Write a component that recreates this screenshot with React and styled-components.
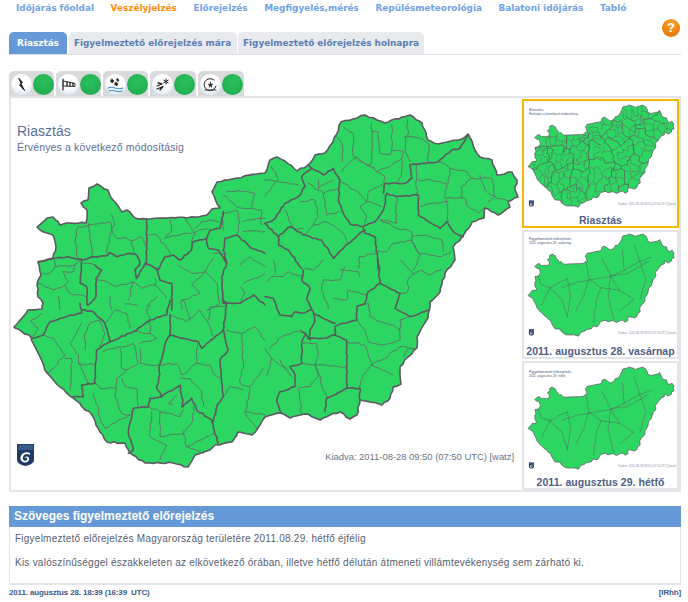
import React from "react";
import styled, { createGlobalStyle } from "styled-components";

const Global = createGlobalStyle`
  html, body { margin: 0; padding: 0; background: #fff; }
  body { width: 688px; height: 602px; overflow: hidden; font-family: "Liberation Sans", Arial, sans-serif; }
`;

const roughen = (d, step, amp) => {
  const closed = /Z\s*$/.test(d);
  const n = d.replace(/[MZ]/g, " ").trim().split(/\s+/).map(Number);
  const pts = [];
  for (let i = 0; i < n.length; i += 2) pts.push([n[i], n[i + 1]]);
  if (closed) pts.push(pts[0]);
  let out = `M${pts[0][0]} ${pts[0][1]}`;
  let seed = pts[0][0] * 13.7 + pts[0][1] * 7.3;
  for (let i = 1; i < pts.length; i++) {
    const [ax, ay] = pts[i - 1];
    const [bx, by] = pts[i];
    const len = Math.hypot(bx - ax, by - ay);
    const count = Math.max(1, Math.round(len / step));
    for (let k = 1; k <= count; k++) {
      const t = k / count;
      seed += 1;
      const r = Math.sin(seed * 12.9898) * 43758.5453;
      const j = k === count ? 0 : ((r - Math.floor(r)) - 0.5) * 2 * amp;
      const x = ax + (bx - ax) * t + (-(by - ay) / (len || 1)) * j;
      const y = ay + (by - ay) * t + ((bx - ax) / (len || 1)) * j;
      out += ` ${x.toFixed(1)} ${y.toFixed(1)}`;
    }
  }
  return out + (closed ? "Z" : "");
};

const OUTLINE = roughen("M14 327 23 317 28 310 42 309 43 303 38 297 37 285 41 275 38 262 53 258 56 247 53 235 40 230 37 227 47 218 53 217 60 225 70 223 86 223 87 210 81 203 88 200 89 188 97 184 108 190 113 200 122 212 127 210 135 218 147 219 167 218 187 218 207 215 212 209 220 208 212 192 217 182 237 178 265 173 270 160 277 157 285 161 297 171 308 165 315 155 325 153 333 142 341 122 365 115 385 123 402 117 410 115 422 123 428 140 438 144 462 139 468 134 475 150 480 157 492 160 497 175 512 172 517 180 515 190 518 197 508 202 510 207 498 215 485 208 484 218 472 222 462 237 453 247 455 260 445 273 440 292 430 302 428 318 417 337 417 348 408 357 400 367 401 384 393 387 390 398 382 405 360 400 357 415 350 419 340 412 330 415 320 420 308 414 290 418 280 413 265 417 258 428 252 435 238 432 232 442 215 445 210 450 195 455 188 467 173 463 145 463 130 453 125 443 107 442 100 432 92 415 73 398 60 387 47 373 33 343 31 337 15 328Z", 4, 0.8);

const QUADS = [
  {
    at: [10, 150],
    thick: [
      "M85 335 130 325 175 320 220 330 250 320 290 318 300 308 320 320 355 310 380 315 390 340 375 360 380 385 405 340 420 345 445 360 465 320 490 315 510 330 545 300 550 275 590 265 595 295 625 300 650 340 640 300 645 265 680 255 725 295 765 310",
      "M590 265 600 240 630 235 640 185",
      "M410 208 410 345",
      "M215 330 210 400 230 410 232 465",
      "M255 345 275 360 258 385 258 440 235 465",
      "M440 355 450 390 485 400 485 480",
      "M650 340 635 380 640 460 690 460 730 435 765 465",
    ],
    thin: [
      "M235 220 245 290 245 325",
      "M195 270 205 230 300 215 305 240 290 310",
      "M195 270 205 325",
      "M305 195 315 225 305 240 320 265 345 262 365 272 395 260 410 290",
      "M365 272 370 305 385 320",
      "M480 210 485 245 465 265 510 255 535 250",
      "M410 255 440 255 470 295 480 310",
      "M525 205 545 235 555 250 545 280",
      "M555 235 575 215 600 210 640 215",
      "M540 250 595 235",
      "M130 325 135 350 195 345 215 330",
      "M100 370 120 370 135 350",
      "M160 365 190 365 195 345",
      "M160 365 175 395 165 405 180 430 230 440",
      "M85 400 130 420 165 405",
      "M255 345 220 340",
      "M258 385 290 395 320 410 370 395 395 415 435 405",
      "M370 395 355 450",
      "M435 385 435 405 470 445",
      "M505 345 545 370 585 365 595 345 610 325",
      "M585 365 620 400",
      "M585 365 545 405 570 430 515 450 515 480",
      "M610 310 650 310",
      "M640 240 640 190 680 180 690 215 680 255",
      "M690 345 720 320 765 350",
      "M700 400 765 370",
      "M690 410 705 430 690 460",
      "M620 400 630 460 590 480",
      "M650 125 700 125 735 130 725 170",
      "M640 135 680 170 755 180 755 225",
      "M700 215 765 205",
      "M700 245 765 245",
      "M145 440 150 480",
      "M300 440 305 480",
      "M345 462 380 465",
      "M410 470 440 440",
    ],
  },
  {
    at: [265, 100],
    thick: [
      "M0 370 25 360 60 310 100 290 120 260 110 230 140 205 175 225 205 205 225 240 220 300 235 340 255 372 295 380 330 365 355 330 365 280 395 290 460 285 460 345 525 385 545 365 570 400 595 410",
      "M360 250 420 250 440 235 435 195 520 185 560 150 585 145 610 103",
      "M130 195 140 205",
      "M295 385 300 400 330 410 340 510",
      "M300 390 250 430 205 475 170 420 115 405 75 380 40 410 40 435 70 450 110 505",
      "M0 370 40 410",
      "M360 250 355 280",
    ],
    thin: [
      "M235 80 265 100 265 170 285 185 330 205",
      "M215 110 230 130 232 185",
      "M320 70 320 190 310 195 335 215",
      "M320 95 340 95 345 160 375 165 380 150 415 155 410 215 400 245",
      "M380 75 380 150",
      "M425 55 430 105 420 110 420 155 435 185",
      "M420 110 470 115 490 130 490 185",
      "M230 215 270 170 310 195",
      "M335 215 360 230 355 250 310 275 305 305 350 320",
      "M225 245 270 270 305 305 285 320 305 350 295 380",
      "M335 215 375 200 410 175",
      "M130 250 160 270 175 280 185 345 220 335",
      "M160 240 160 265 205 240",
      "M105 305 150 300 160 350 145 375 115 405",
      "M60 330 85 385 115 385",
      "M175 280 220 265",
      "M145 375 185 365 235 400 250 430",
      "M0 240 40 245 100 255",
      "M20 200 40 240 0 290",
      "M520 185 550 200 555 205 605 215",
      "M460 240 500 240 545 250 540 295 600 295 605 315 640 340 660 320",
      "M455 195 455 285",
      "M555 205 550 250",
      "M605 215 620 235 590 260 590 295",
      "M620 235 680 235 690 290 670 305",
      "M645 225 660 270 695 295 735 305",
      "M545 300 550 365",
      "M465 320 500 310 550 305",
      "M395 290 395 370 345 360 385 380 440 395 440 420",
      "M440 410 480 405 530 420 535 455",
      "M330 455 365 455 385 430 440 420 460 460 530 470 560 455",
      "M440 420 465 465 445 510",
      "M285 470 335 460",
      "M285 470 280 505",
    ],
  },
  {
    at: [10, 300],
    thick: [
      "M65 115 100 105 120 65 180 45 215 40 210 10",
      "M215 30 250 35 285 70 300 125 370 95 420 60 470 45 480 0",
      "M300 125 260 150 255 250 215 255 220 290 190 290",
      "M480 45 480 105 520 115 565 125 575 145 640 90 655 150 630 180 640 290 620 320 610 365 560 330 545 295 515 320",
      "M470 120 450 190 445 250 440 265 455 290 420 295 415 320 370 325 355 400 370 450 355 460",
      "M480 105 470 120",
      "M455 290 510 255 520 320",
      "M640 90 650 10 640 0",
      "M605 365 625 430",
    ],
    thin: [
      "M65 110 85 85 60 65 95 40",
      "M100 105 130 115 165 165 115 220",
      "M165 175 185 175 180 270",
      "M215 70 180 130 205 165 205 190 255 195",
      "M225 150 225 100 240 70 270 60 285 100 270 140",
      "M205 190 235 250",
      "M280 155 325 140 345 140 370 130 385 190 350 210",
      "M330 145 335 205 350 210",
      "M390 145 390 190 445 195",
      "M420 60 420 100 440 115 390 130",
      "M370 95 420 100",
      "M285 70 315 30 350 40 360 85",
      "M420 60 410 30 420 15",
      "M480 45 530 65 570 30 590 60",
      "M520 0 540 60",
      "M590 60 610 110",
      "M595 60 600 20 650 15",
      "M565 125 560 190 600 195 610 220 635 235",
      "M445 195 500 190 515 225 560 190",
      "M510 235 540 235 575 275 580 320",
      "M350 210 320 235 315 290 335 340 360 345",
      "M255 250 270 265 315 265",
      "M250 280 265 320 265 345 285 385 360 345",
      "M335 235 345 260 380 265 385 320",
      "M425 335 420 410 470 435 450 480",
      "M450 335 450 410 525 400",
      "M415 320 450 335 510 350 520 330",
      "M555 310 545 370 520 395 530 440 580 460",
      "M530 440 610 400",
      "M490 315 475 310 500 285",
      "M650 90 695 100 700 190 690 250 720 260 760 205",
      "M640 290 660 260 700 270",
      "M720 260 705 340 740 385",
      "M705 335 765 345",
      "M695 100 735 80 765 120",
    ],
  },
  {
    at: [265, 260],
    thick: [
      "M340 0 345 70 310 95 300 130 275 140 275 180 235 190 210 200 210 225 245 240 245 385 285 385 285 420",
      "M115 30 110 60 135 85 125 120 145 155 150 180 135 210 135 240 120 220 110 215",
      "M345 70 405 100 390 145 435 170 490 150",
      "M0 110 25 115 45 165 80 170 90 155 110 160 140 150",
      "M135 235 175 235 210 225",
      "M145 160 210 190",
      "M120 225 110 250 110 310 75 320 90 345 90 380 45 395 35 425 50 460",
      "M185 415 180 455",
      "M245 385 185 415",
    ],
    thin: [
      "M405 0 445 40 430 55 428 95 405 100",
      "M445 45 470 30 495 45 530 30",
      "M275 140 310 130 315 170 345 185 385 195 405 210",
      "M275 180 300 210 310 245 350 255 405 240",
      "M405 240 405 180 435 170",
      "M405 260 350 300 320 315 300 255 245 245",
      "M405 260 455 265",
      "M320 315 385 345",
      "M320 315 295 345 280 385",
      "M150 315 245 320",
      "M115 250 155 250 160 275 150 315 185 410",
      "M110 310 150 315 160 350 135 380 100 385 110 460",
      "M0 265 20 295 70 330",
      "M20 295 5 345",
      "M45 300 80 350",
      "M15 265 50 230 110 210",
      "M175 60 225 60 240 20",
      "M175 60 170 90 190 145",
      "M205 115 245 120 250 90 305 105",
      "M5 65 20 50 55 50 70 35 115 50",
      "M25 0 30 40",
      "M175 0 145 30 120 25",
      "M225 30 280 35 285 50",
      "M415 290 430 265",
    ],
  },
].map(q => ({
  at: q.at,
  thick: q.thick.map(d => roughen(d, 10, 2)),
  thin: q.thin.map(d => roughen(d, 12, 3)),
}));

const SECONDARY = [
  "M48 260 60 290 90 300 125 280 150 270",
  "M130 300 190 280 250 270 300 260 360 250 430 210",
  "M215 215 225 270 205 330 180 380",
  "M300 260 330 310 380 340 330 380",
  "M150 270 160 330 150 400",
  "M90 300 130 340 150 400",
  "M225 270 265 300 250 340 240 420",
  "M265 300 330 310",
  "M340 170 345 240 300 260",
  "M345 240 400 210 440 195",
  "M400 210 420 270 400 340",
  "M300 260 290 330 310 410",
  "M90 300 60 360",
  "M380 150 400 210",
  "M270 200 300 260",
].map(d => roughen(d, 5, 1.6));

const MapSvg = styled.svg`
  display: block;
  width: ${p => p.$w}px;
  height: ${p => p.$h}px;
  flex: none;
`;

const Land = styled.path`
  fill: #2dd662;
  stroke: #5c5a60;
  stroke-width: ${p => p.$s}px;
  stroke-linejoin: round;
  vector-effect: non-scaling-stroke;
`;

const Border = styled.path`
  fill: none;
  stroke: ${p => (p.$major ? "#5a5a60" : "#5f7068")};
  stroke-width: ${p => p.$s}px;
  stroke-linejoin: round;
  stroke-linecap: round;
  vector-effect: non-scaling-stroke;
`;

const MapShapes = ({ major, minor, simple }) => (
  <>
    <Land d={OUTLINE} $s={major} />
    {simple
      ? SECONDARY.map((d, i) => <Border key={i} d={d} $major $s={minor} />)
      : QUADS.map(q => (
          <g key={q.at[0] + "-" + q.at[1]} transform={`translate(${q.at[0]} ${q.at[1]}) scale(0.3333)`}>
            {q.thin.map((d, i) => <Border key={i} d={d} $s={minor} />)}
            {q.thick.map((d, i) => <Border key={"t" + i} d={d} $major $s={major} />)}
          </g>
        ))}
  </>
);

const Shield = () => (
  <g>
    <path d="M0 0H17V16Q17 20 8.500 22 0 20 0 16Z" fill="#1e3a66" />
    <rect x="1" y="1" width="15" height="5" fill="#3c5a88" />
    <path d="M13 9C8 7 3 10 3.500 15 4 19 10 20 12 16 13 13 9 11 7.500 14 9 13 11 14 10 16 8 18 5 16 6 13 7 10 10 9 13 11Z" fill="#fff" />
  </g>
);

const Page = styled.div`
  position: relative;
  width: 688px;
  height: 602px;
`;

const Nav = styled.nav`
  display: flex;
  gap: 16.6px;
  height: 32px;
  padding: 1.5px 0 0 16px;
  box-sizing: border-box;
`;

const NavLink = styled.span`
  font: bold 8.9px/13px "DejaVu Sans", Verdana, sans-serif;
  color: ${p => (p.$active ? "#ff8c0a" : "#6ea3e6")};
  white-space: nowrap;
`;

const Help = styled.div`
  position: absolute;
  left: 662px;
  top: 19px;
  width: 18px;
  height: 18px;
  border-radius: 50%;
  background: radial-gradient(circle at 50% 25%, #f9a52a, #e97a0c 75%);
  color: #fff;
  font: bold 13px/18px "Liberation Sans", Arial, sans-serif;
  text-align: center;
`;

const Tabs = styled.div`
  display: flex;
  gap: 1.5px;
  margin: 0 7px 0 9px;
  height: 23px;
  box-sizing: border-box;
  border-bottom: 1px solid #dfe1e5;
`;

const Tab = styled.div`
  height: 22px;
  width: ${p => p.$w}px;
  box-sizing: border-box;
  border-radius: 5px 5px 0 0;
  background: ${p => (p.$active ? "#6699d8" : "#e8eaee")};
  color: ${p => (p.$active ? "#fff" : "#5b7fb6")};
  font: bold 8.9px/22px "DejaVu Sans", Verdana, sans-serif;
  text-align: center;
  white-space: nowrap;
`;

const Hazards = styled.div`
  display: flex;
  gap: 2px;
  margin: 16px 0 0 9px;
  height: 25px;
`;

const Hazard = styled.div`
  display: flex;
  gap: 1px;
  width: ${p => p.$w}px;
  height: 25px;
  box-sizing: border-box;
  padding: 3px 0 0 2px;
  background: #d9dadc;
  border-radius: 5px 5px 0 0;
`;

const IconDisc = styled.div`
  width: 21px;
  height: 21px;
  border-radius: 50%;
  background: radial-gradient(circle at 50% 30%, #fff 45%, #c9dcf1);
  display: flex;
  align-items: center;
  justify-content: center;
`;

const Lamp = styled.div`
  width: 21px;
  height: 21px;
  border-radius: 50%;
  background: radial-gradient(circle at 50% 35%, #2cc05e, #1ea94c);
`;

const Panel = styled.section`
  display: flex;
  width: 672px;
  height: 396px;
  margin-left: 9px;
  box-sizing: border-box;
  border: 2px solid #e3e5e8;
`;

const MapArea = styled.div`
  position: relative;
  width: 511px;
  flex: none;
`;

const MapTitle = styled.div`
  position: absolute;
  left: 6px;
  top: 25px;
  color: #5c6e98;
  font: 14px/17px "Liberation Sans", Arial, sans-serif;
`;

const MapSub = styled.div`
  font-size: 10.5px;
  line-height: 14px;
  letter-spacing: 0.15px;
`;

const Logo = styled.svg`
  position: absolute;
  left: 6px;
  top: 346px;
  width: 17px;
  height: 22px;
`;

const Issued = styled.div`
  position: absolute;
  right: 8px;
  top: 353px;
  color: #6d7686;
  font: 9.5px/12px "Liberation Sans", Arial, sans-serif;
  letter-spacing: -0.05px;
  white-space: nowrap;
`;

const Thumbs = styled.div`
  display: flex;
  flex-direction: column;
  gap: 2px;
  width: 157px;
  padding-top: 1px;
`;

const Thumb = styled.div`
  height: 130px;
  box-sizing: border-box;
  border: 2px solid ${p => (p.$active ? "#f5b800" : "#e3e5e8")};
  display: flex;
  flex-direction: column;
  align-items: center;
  overflow: hidden;
`;

const ThumbCaption = styled.div`
  color: #4d5f86;
  font: bold 10.5px/14px "Liberation Sans", Arial, sans-serif;
  letter-spacing: 0.05px;
  white-space: nowrap;
`;

const TextHeader = styled.h2`
  margin: 14px 0 0 9px;
  width: 672px;
  height: 21px;
  box-sizing: border-box;
  padding-left: 5px;
  background: #6699d8;
  color: #fff;
  font: bold 12px/21px "Liberation Sans", Arial, sans-serif;
`;

const TextBody = styled.div`
  margin-left: 9px;
  width: 672px;
  height: 58px;
  box-sizing: border-box;
  padding: 6px 5px 0;
  border: solid #e3e5e8;
  border-width: 0 1px 2px 1px;
  color: #566070;
  font: 10px/12px "Liberation Sans", Arial, sans-serif;
  letter-spacing: 0.24px;
`;

const TextLine = styled.p`
  margin: 0 0 12px;
`;

const Footer = styled.footer`
  display: flex;
  justify-content: space-between;
  margin: 2px 7px 0 9px;
  color: #3d5a8a;
  font: bold 8px/12px "Liberation Sans", Arial, sans-serif;
  letter-spacing: -0.15px;
`;

const Ico = ({ children }) => (
  <svg width="17" height="17" viewBox="0 0 17 17" fill="none" stroke="#222" strokeLinecap="round" strokeLinejoin="round">
    {children}
  </svg>
);

const icons = [
  <Ico key="a"><path d="M6 2.500 9.500 6.500 8 7.500 11.500 14.500 6.500 9 8 8Z" fill="#222" strokeWidth="1" /></Ico>,
  <Ico key="b"><path d="M3 3V14" strokeWidth="1.2" /><path d="M3.500 5 15 7.500V10.500L3.500 10Z" fill="#fff" strokeWidth=".9" /><path d="M7 6V10M10 6.500V10M13 7V10" strokeWidth="1.3" /></Ico>,
  <Ico key="c"><path d="M5 3 7 5 5 7 3.500 5ZM9 6 11 8 9.500 10 7.500 8ZM10.500 2.500 12 4 11 5.500 9.500 4Z" fill="#222" strokeWidth=".7" /><path d="M1 12Q4 10.500 8 12T16 12M2 15Q5 13.500 8.500 15T15 15" stroke="#3b8fd6" strokeWidth="1.2" /></Ico>,
  <Ico key="d"><path d="M3 10 8 8 4 7M3 13 9 10.500 6 14" strokeWidth="1.3" /><path d="M12 3V8M9.800 4.200 14.200 6.800M14.200 4.200 9.800 6.800" strokeWidth="1" /></Ico>,
  <Ico key="e"><path d="M14 10A6 6 0 1 1 12 4" strokeWidth="1" /><path d="M8.500 6 9 8 11 8.300 9.400 9.500 10 11.500 8.500 10.300 7 11.500 7.500 9.500 6 8.300 8 8Z" fill="#222" strokeWidth=".4" /><path d="M3 14H14" strokeWidth=".9" /></Ico>,
];

const hazardWidths = [45, 45, 45, 46, 46];

const Thumbnail = ({ active, caption, top, simple, title, sub }) => (
  <Thumb $active={active}>
    <MapSvg $w={153} $h={112} viewBox={`0 ${top} 528 386`} preserveAspectRatio="xMinYMin meet">
      <MapShapes major={0.8} minor={simple ? 0.5 : 0.6} simple={simple} />
      <text x="17" y="134" fontSize="13" fontFamily="Liberation Sans" fill="#44557c">{title}</text>
      <text x="17" y="150" fontSize="11" fontFamily="Liberation Sans" fill="#44557c">{sub}</text>
      <g transform="translate(17 444)"><Shield /></g>
      <text x="325" y="460" fontSize="10" fontFamily="Liberation Sans" fill="#8a92a0">Kiadva: 2011-08-28 09:50 (07:50 UTC) [watz]</text>
    </MapSvg>
    <ThumbCaption>{caption}</ThumbCaption>
  </Thumb>
);

export default function App() {
  return (
    <Page>
      <Global />
      <Nav>
        <NavLink>Időjárás főoldal</NavLink>
        <NavLink $active>Veszélyjelzés</NavLink>
        <NavLink>Előrejelzés</NavLink>
        <NavLink>Megfigyelés,mérés</NavLink>
        <NavLink>Repülésmeteorológia</NavLink>
        <NavLink>Balatoni időjárás</NavLink>
        <NavLink>Tabló</NavLink>
      </Nav>
      <Help>?</Help>
      <Tabs>
        <Tab $active $w={58}>Riasztás</Tab>
        <Tab $w={168}>Figyelmeztető előrejelzés mára</Tab>
        <Tab $w={186}>Figyelmeztető előrejelzés holnapra</Tab>
      </Tabs>
      <Hazards>
        {icons.map((icon, i) => (
          <Hazard key={i} $w={hazardWidths[i]}>
            <IconDisc>{icon}</IconDisc>
            <Lamp />
          </Hazard>
        ))}
      </Hazards>
      <Panel>
        <MapArea>
          <MapSvg $w={511} $h={392} viewBox="11 98 511 392">
            <MapShapes major={1.6} minor={0.9} />
          </MapSvg>
          <MapTitle>
            Riasztás
            <MapSub>Érvényes a következő módosításig</MapSub>
          </MapTitle>
          <Logo viewBox="0 0 17 22"><Shield /></Logo>
          <Issued>Kiadva: 2011-08-28 09:50 (07:50 UTC) [watz]</Issued>
        </MapArea>
        <Thumbs>
          <Thumbnail active caption="Riasztás" top={101} title="Riasztás" sub="Érvényes a következő módosításig" />
          <Thumbnail simple caption="2011. augusztus 28. vasárnap" top={108} title="Figyelmeztető előrejelzés" sub="2011. augusztus 28. vasárnap" />
          <Thumbnail simple caption="2011. augusztus 29. hétfő" top={101} title="Figyelmeztető előrejelzés" sub="2011. augusztus 29. hétfő" />
        </Thumbs>
      </Panel>
      <TextHeader>Szöveges figyelmeztető előrejelzés</TextHeader>
      <TextBody>
        <TextLine>Figyelmeztető előrejelzés Magyarország területére 2011.08.29. hétfő éjfélig</TextLine>
        <TextLine>Kis valószínűséggel északkeleten az elkövetkező órában, illetve hétfő délután átmeneti villámtevékenység sem zárható ki.</TextLine>
      </TextBody>
      <Footer>
        <span>2011. augusztus 28. 18:39 (16:39 &nbsp;UTC)</span>
        <span>[IRhh]</span>
      </Footer>
    </Page>
  );
}
